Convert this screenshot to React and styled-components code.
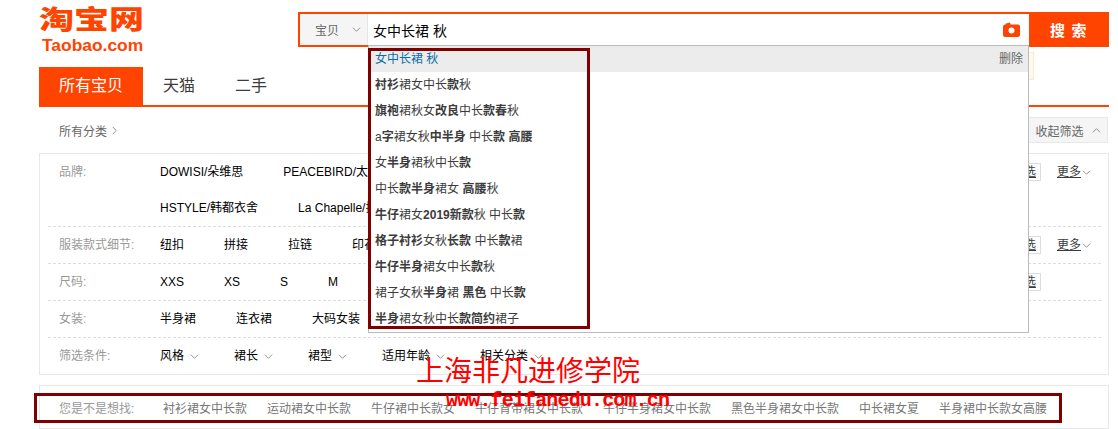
import React from 'react';
import styled, { createGlobalStyle } from 'styled-components';

const orange = '#ff4400';

const GlobalStyle = createGlobalStyle`
  html, body {
    margin: 0;
    background: #fff;
    font-family: "Liberation Sans", "Noto Sans CJK SC", sans-serif;
    font-size: 12px;
    color: #3c3c3c;
  }
  * { box-sizing: border-box; }
`;

const suggestions = [
  <>女中长裙 秋</>,
  <><b>衬衫</b>裙女中长<b>款</b>秋</>,
  <><b>旗袍</b>裙秋女<b>改良</b>中长<b>款春</b>秋</>,
  <>a<b>字</b>裙女秋<b>中半身</b> 中长<b>款 高腰</b></>,
  <>女<b>半身</b>裙秋中长<b>款</b></>,
  <>中长<b>款半身</b>裙女 <b>高腰</b>秋</>,
  <><b>牛仔</b>裙女<b>2019新款</b>秋 中长<b>款</b></>,
  <><b>格子衬衫</b>女秋<b>长款</b> 中长<b>款</b>裙</>,
  <><b>牛仔半身</b>裙女中长<b>款</b>秋</>,
  <>裙子女秋<b>半身</b>裙 <b>黑色</b> 中长<b>款</b></>,
  <><b>半身</b>裙女秋中长<b>款简约</b>裙子</>,
];

const filterRows = [
  { label: '品牌:', lines: [['DOWISI/朵维思', 'PEACEBIRD/太平鸟'], ['HSTYLE/韩都衣舍', 'La Chapelle/拉夏贝尔']], multi: true, more: true },
  { label: '服装款式细节:', lines: [['纽扣', '拼接', '拉链', '印花']], multi: true, more: true },
  { label: '尺码:', lines: [['XXS', 'XS', 'S', 'M']], multi: true },
  { label: '女装:', lines: [['半身裙', '连衣裙', '大码女装']] },
];

const conditions = ['风格', '裙长', '裙型', '适用年龄', '相关分类'];

const guesses = ['衬衫裙女中长款', '运动裙女中长款', '牛仔裙中长款女', '牛仔背带裙女中长款', '牛仔半身裙女中长款', '黑色半身裙女中长款', '中长裙女夏', '半身裙中长款女高腰'];

const Page = styled.div`
  position: relative;
  width: 1118px;
  height: 429px;
  overflow: hidden;
  padding: 8px 9px 0 39px;
`;

const Header = styled.header`
  display: flex;
  height: 59px;
`;

const Logo = styled.div`
  width: 259px;
  color: ${orange};
  font-weight: 900;
`;

const LogoCn = styled.div`
  height: 30px;
  margin-top: -2px;
  font-size: 35px;
  line-height: 30px;
  font-family: "Noto Sans CJK SC", sans-serif;
  transform: scaleY(0.76);
  transform-origin: top left;
`;

const LogoEn = styled.div`
  font-size: 17.4px;
  line-height: 18px;
  margin-left: 3px;
  font-weight: 700;
`;

const Search = styled.div`
  display: flex;
  height: 35px;
  margin-top: 4px;
`;

const SearchBox = styled.div`
  display: flex;
  align-items: center;
  width: 731px;
  border: 2px solid ${orange};
  border-right: 0;
`;

const ScopeSelect = styled.div`
  display: flex;
  align-items: center;
  gap: 13px;
  width: 68px;
  height: 100%;
  padding-left: 15px;
  background: #f5f5f5;
  color: #666;
  border-right: 1px solid #e6e6e6;
`;

const QueryText = styled.div`
  flex: 1;
  padding-left: 5px;
  font-size: 14px;
  color: #000;
`;

const CameraIcon = styled.svg`
  width: 17px;
  height: 15px;
  margin-right: 9px;
  fill: ${orange};
`;

const SearchButton = styled.button`
  width: 80px;
  height: 35px;
  border: 0;
  padding: 0;
  background: ${orange};
  color: #fff;
  font: 700 15px "Noto Sans CJK SC", sans-serif;
  letter-spacing: 1.5px;
`;

const Notice = styled.div`
  position: absolute;
  left: 1020px;
  top: 52px;
  width: 14px;
  height: 28px;
  background: #fff8ee;
  border: 1px solid #fdebd0;
`;

const Suggest = styled.ul`
  position: absolute;
  left: 368px;
  top: 45px;
  z-index: 2;
  width: 661px;
  height: 288px;
  margin: 0;
  padding: 0;
  list-style: none;
  background: #fff;
  border: 1px solid #bbb;
`;

const SuggestRow = styled.li`
  display: flex;
  justify-content: space-between;
  height: 26px;
  line-height: 27px;
  padding: 0 5px 0 6px;
  white-space: pre;
  color: ${p => (p.$active ? '#0a6ea8' : '#3c3c3c')};
  background: ${p => (p.$active ? '#ececec' : 'transparent')};
  b { font-weight: 700; }
`;

const DeleteLink = styled.span`
  color: #666;
`;

const Frame = styled.div`
  position: absolute;
  left: ${p => p.$left}px;
  top: ${p => p.$top}px;
  width: ${p => p.$width}px;
  height: ${p => p.$height}px;
  z-index: 3;
  border: 3px solid #800000;
  pointer-events: none;
`;

const Tabs = styled.nav`
  display: flex;
  height: 40px;
  border-bottom: 2px solid ${orange};
`;

const Tab = styled.div`
  height: 40px;
  padding: 0 20px;
  line-height: 38px;
  font-size: 16px;
  color: ${p => (p.$active ? '#fff' : '#3c3c3c')};
  background: ${p => (p.$active ? orange : 'transparent')};
`;

const Crumbs = styled.div`
  display: flex;
  align-items: center;
  justify-content: space-between;
  height: 46px;
  padding-left: 20px;
  color: #666;
`;

const AllCategories = styled.div`
  display: flex;
  align-items: center;
  gap: 3px;
`;

const CollapseButton = styled.div`
  display: flex;
  align-items: center;
  justify-content: center;
  gap: 8px;
  width: 80px;
  height: 26px;
  margin-right: 1px;
  background: #f5f5f5;
  border: 1px solid #e8e8e8;
  color: #666;
`;

const Panel = styled.section`
  width: 1070px;
  border: 1px solid #e8e8e8;
`;

const Row = styled.div`
  display: flex;
  margin: 0 7px 0 8px;
  padding: 0 0 0 11px;
  border-bottom: ${p => (p.$last ? 0 : '1px dashed #ddd')};
`;

const RowLabel = styled.div`
  width: 101px;
  flex: none;
  line-height: 36px;
  color: #999;
`;

const RowValues = styled.div`
  flex: 1;
`;

const ValueLine = styled.div`
  display: flex;
  gap: ${p => p.$gap}px;
  height: 36px;
  line-height: 36px;
  color: #000;
  white-space: nowrap;
`;

const Condition = styled.span`
  display: flex;
  align-items: center;
  gap: 6px;
`;

const RowActions = styled.div`
  display: flex;
  align-items: flex-start;
  flex: none;
  width: 100px;
  height: 36px;
  padding-top: 9px;
`;

const MultiButton = styled.div`
  width: 40px;
  height: 18px;
  margin-right: 16px;
  padding-right: 4px;
  text-align: right;
  line-height: 16px;
  border: 1px solid #ddd;
  color: #3c3c3c;
  text-decoration: underline;
`;

const MoreLink = styled.div`
  display: flex;
  align-items: center;
  gap: 1px;
  line-height: 18px;
  color: #3c3c3c;
  text-decoration: underline;
`;

const GuessPanel = styled.section`
  display: flex;
  align-items: center;
  width: 1070px;
  height: 44px;
  margin-top: 10px;
  padding-left: 19px;
  border: 1px solid #e8e8e8;
  color: #777;
  white-space: nowrap;
`;

const GuessLabel = styled.div`
  width: 104px;
  flex: none;
  color: #999;
`;

const GuessList = styled.div`
  display: flex;
  gap: 20px;
`;

const WatermarkCn = styled.div`
  position: absolute;
  left: 416px;
  top: 349px;
  z-index: 4;
  font-family: "Noto Sans CJK SC", sans-serif;
  font-size: 28px;
  line-height: 40px;
  color: #ff0000;
  white-space: nowrap;
`;

const WatermarkEn = styled.div`
  position: absolute;
  left: 446px;
  top: 389px;
  z-index: 4;
  font-family: "Liberation Mono", monospace;
  font-size: 20px;
  font-weight: 700;
  letter-spacing: -0.85px;
  line-height: 24px;
  color: #ff0000;
  white-space: nowrap;
`;

const Chevron = ({ up, right, size = 9 }) => {
  const points = up ? '1,7 5,3 9,7' : right ? '3,1 7,5 3,9' : '1,3 5,7 9,3';
  return (
    <svg width={size} height={size} viewBox="0 0 10 10" fill="none" stroke="#888" strokeWidth="1">
      <polyline points={points} />
    </svg>
  );
};

const App = () => {
  return (
    <Page>
      <GlobalStyle />
      <Header>
        <Logo>
          <LogoCn>淘宝网</LogoCn>
          <LogoEn>Taobao.com</LogoEn>
        </Logo>
        <Search>
          <SearchBox>
            <ScopeSelect>宝贝<Chevron /></ScopeSelect>
            <QueryText>女中长裙 秋</QueryText>
            <CameraIcon viewBox="0 0 17 15">
              <path fillRule="evenodd" d="M3 1.5 L7 0.5 L7.5 2.5 H15 Q17 2.5 17 4.5 V13 Q17 15 15 15 H2 Q0 15 0 13 V4.5 Q0 2.5 2.5 2.5 Z M8.5 5.5 A3 3 0 1 0 8.5 11.5 A3 3 0 1 0 8.5 5.5 Z" />
            </CameraIcon>
          </SearchBox>
          <SearchButton>搜 索</SearchButton>
        </Search>
      </Header>
      <Notice />
      <Suggest>
        {suggestions.map((text, index) => (
          <SuggestRow key={index} $active={index === 0}>
            <span>{text}</span>
            {index === 0 && <DeleteLink>删除</DeleteLink>}
          </SuggestRow>
        ))}
      </Suggest>
      <Frame $left={368} $top={48} $width={222} $height={281} />
      <Tabs>
        <Tab $active>所有宝贝</Tab>
        <Tab>天猫</Tab>
        <Tab>二手</Tab>
      </Tabs>
      <Crumbs>
        <AllCategories>所有分类<Chevron right /></AllCategories>
        <CollapseButton>收起筛选<Chevron up /></CollapseButton>
      </Crumbs>
      <Panel>
        {filterRows.map(row => (
          <Row key={row.label}>
            <RowLabel>{row.label}</RowLabel>
            <RowValues>
              {row.lines.map((line, i) => (
                <ValueLine key={i} $gap={40}>
                  {line.map(v => <span key={v}>{v}</span>)}
                </ValueLine>
              ))}
            </RowValues>
            <RowActions>
              {row.multi && <MultiButton>多选</MultiButton>}
              {row.more && <MoreLink>更多<Chevron /></MoreLink>}
            </RowActions>
          </Row>
        ))}
        <Row $last>
          <RowLabel>筛选条件:</RowLabel>
          <RowValues>
            <ValueLine $gap={35}>
              {conditions.map(c => (
                <Condition key={c}>{c}<Chevron /></Condition>
              ))}
            </ValueLine>
          </RowValues>
        </Row>
      </Panel>
      <GuessPanel>
        <GuessLabel>您是不是想找:</GuessLabel>
        <GuessList>
          {guesses.map(g => <span key={g}>{g}</span>)}
        </GuessList>
      </GuessPanel>
      <Frame $left={34} $top={393} $width={1028} $height={30} />
      <WatermarkCn>上海非凡进修学院</WatermarkCn>
      <WatermarkEn>www.feifanedu.com.cn</WatermarkEn>
    </Page>
  );
};

export default App;
